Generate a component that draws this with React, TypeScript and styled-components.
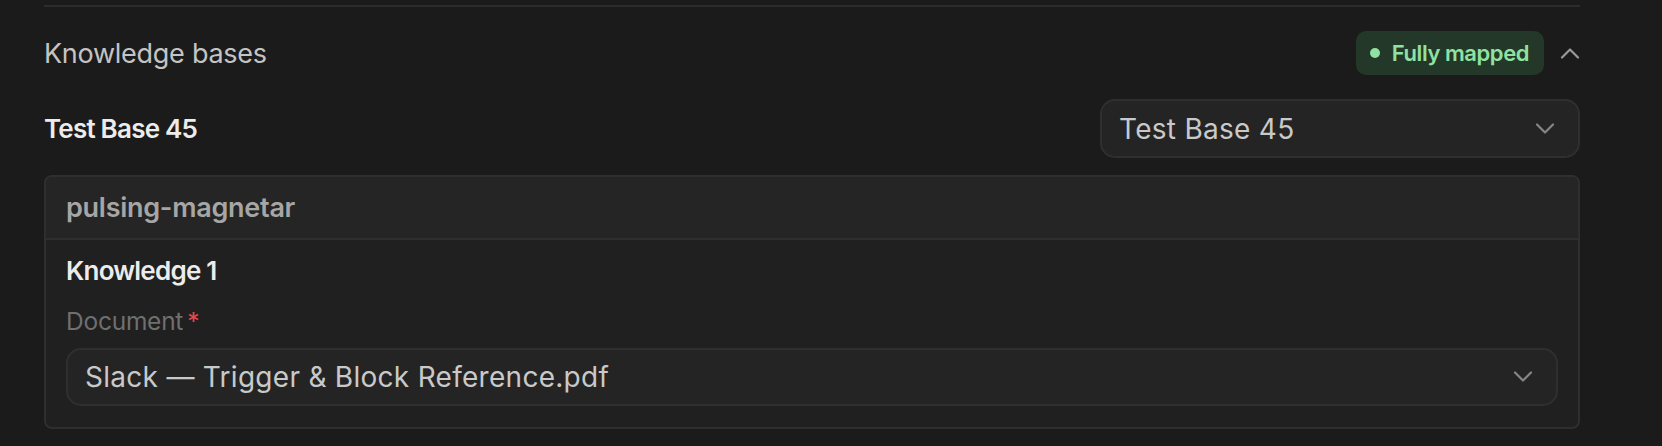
import styled, { createGlobalStyle } from "styled-components"

const GlobalStyle = createGlobalStyle`
  body {
    margin: 0;
    background: #1b1b1b;
    font-family: Inter, "Noto Sans", sans-serif;
    -webkit-font-smoothing: antialiased;
  }
`

const Chevron: React.FC<{ up?: boolean; color: string }> = ({ up, color }) => (
  <svg width="20" height="12" viewBox="0 0 20 12" fill="none">
    <path
      d={up ? "M2 10.5 L10 2.5 L18 10.5" : "M2 1.5 L10 9.5 L18 1.5"}
      stroke={color}
      strokeWidth="2.2"
      strokeLinecap="round"
      strokeLinejoin="round"
    />
  </svg>
)

const Select: React.FC<{ value: string; full?: boolean }> = ({ value, full }) => (
  <SelectBox $full={full}>
    <SelectValue>{value}</SelectValue>
    <Chevron color="#868686" />
  </SelectBox>
)

const App: React.FC = () => {
  return (
    <>
      <GlobalStyle />
      <Page>
        <Section>
          <Header>
            <Title>Knowledge bases</Title>
            <HeaderRight>
              <Badge>
                <Dot />
                Fully mapped
              </Badge>
              <Chevron up color="#9a9a9a" />
            </HeaderRight>
          </Header>
          <Row>
            <RowLabel>Test Base 45</RowLabel>
            <Select value="Test Base 45" />
          </Row>
          <Card>
            <CardHeader>pulsing-magnetar</CardHeader>
            <CardBody>
              <ItemTitle>Knowledge 1</ItemTitle>
              <FieldLabel>
                Document<Required>*</Required>
              </FieldLabel>
              <Select full value="Slack — Trigger & Block Reference.pdf" />
            </CardBody>
          </Card>
        </Section>
      </Page>
    </>
  )
}

export default App

const Page = styled.div`
  padding: 5px 82px 0 44px;
`
const Section = styled.section`
  border-top: 2px solid #2c2c2c;
`
const Header = styled.div`
  display: flex;
  align-items: center;
  justify-content: space-between;
  height: 44px;
  margin-top: 24px;
`
const Title = styled.h3`
  margin: 0;
  font-size: 27px;
  font-weight: 400;
  color: #c4c4c4;
  letter-spacing: -0.01em;
`
const HeaderRight = styled.div`
  display: flex;
  align-items: center;
  gap: 16px;
`
const Badge = styled.span`
  display: flex;
  align-items: center;
  gap: 12px;
  height: 44px;
  padding: 0 15px 0 14px;
  border-radius: 10px;
  background: #233828;
  color: #8fe2a1;
  font-size: 22px;
  font-weight: 600;
  letter-spacing: -0.02em;
`
const Dot = styled.span`
  width: 10px;
  height: 10px;
  border-radius: 50%;
  background: #8fe2a1;
`
const Row = styled.div`
  display: flex;
  align-items: center;
  justify-content: space-between;
  margin-top: 24px;
`
const RowLabel = styled.div`
  font-size: 26px;
  font-weight: 600;
  color: #ececec;
  letter-spacing: -0.03em;
`
const SelectBox = styled.div<{ $full?: boolean }>`
  display: flex;
  align-items: center;
  justify-content: space-between;
  box-sizing: border-box;
  width: ${(p) => (p.$full ? "100%" : "480px")};
  height: ${(p) => (p.$full ? "58px" : "59px")};
  margin-top: ${(p) => (p.$full ? "11px" : "0")};
  padding: 0 23px 0 17px;
  background: #242424;
  border: 2px solid #2f2f2f;
  border-radius: 15px;
`
const SelectValue = styled.span`
  font-size: 28px;
  color: #c9c9c9;
  letter-spacing: 0.01em;
`
const Card = styled.div`
  margin-top: 17px;
  background: #202020;
  border: 2px solid #2f2f2f;
  border-radius: 8px;
  overflow: hidden;
`
const CardHeader = styled.div`
  display: flex;
  align-items: center;
  height: 61px;
  padding: 0 20px;
  background: #252525;
  border-bottom: 2px solid #2f2f2f;
  font-size: 27px;
  font-weight: 600;
  color: #a6a6a6;
  letter-spacing: -0.01em;
`
const CardBody = styled.div`
  padding: 15px 20px 21px;
`
const ItemTitle = styled.div`
  font-size: 26px;
  line-height: 32px;
  font-weight: 600;
  color: #ececec;
  letter-spacing: -0.03em;
`
const FieldLabel = styled.div`
  margin-top: 18px;
  font-size: 24.5px;
  line-height: 32px;
  color: #6f6f6f;
  letter-spacing: -0.01em;
`
const Required = styled.span`
  margin-left: 4px;
  color: #e5484d;
`
